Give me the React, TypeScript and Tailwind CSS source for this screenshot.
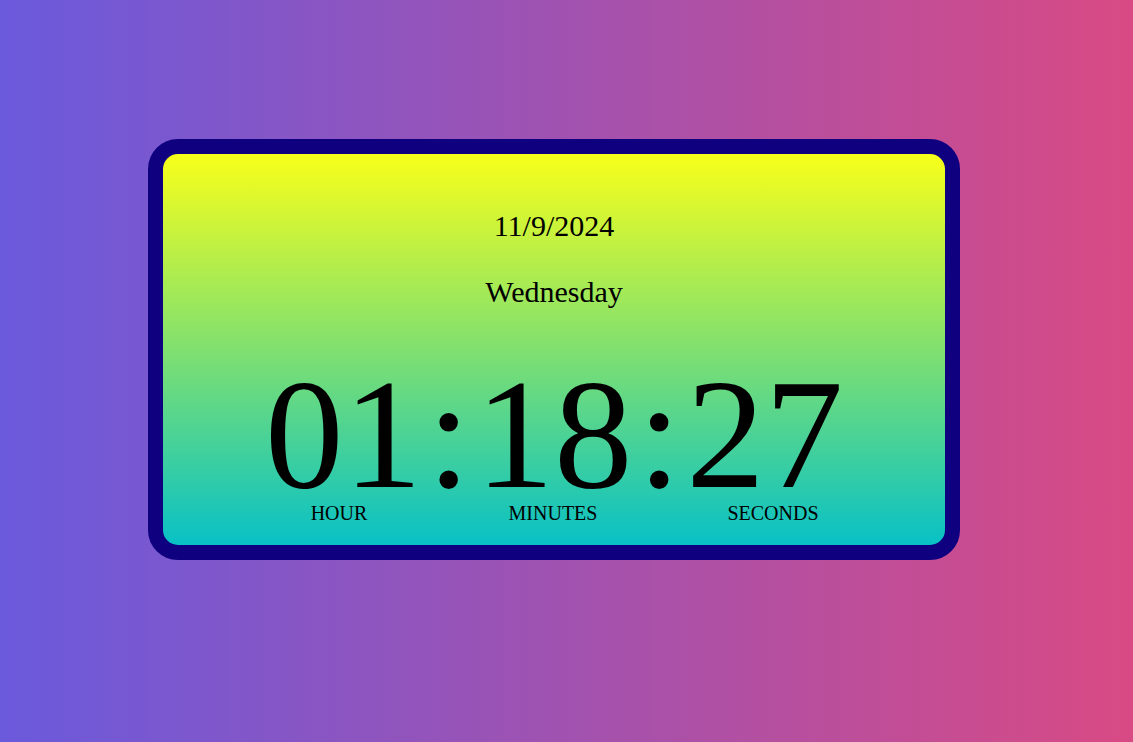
const units = [
  { value: "01", label: "HOUR" },
  { value: "18", label: "MINUTES" },
  { value: "27", label: "SECONDS" },
];

export default function App() {
  return (
    <div
      className="h-[742px] w-full bg-[linear-gradient(to_right,#6a5adc,#d84a84)] pl-[148px] pt-[139px] text-black"
      style={{ fontFamily: '"Liberation Serif", "Times New Roman", serif' }}
    >
      <div className="w-[812px] rounded-[30px] border-[15px] border-[#0f0080] bg-[#0f0080]">
        <div className="flex flex-col items-center rounded-[15px] bg-[linear-gradient(to_bottom,#f8ff1a,#08c1c6)] pt-[55px] pb-[20px]">
          <p className="text-[30px] leading-[34px]">11/9/2024</p>
          <p className="mt-[32px] text-[30px] leading-[34px]">Wednesday</p>

          <div className="mt-[57px] flex gap-[5px] text-[157px] leading-[136px]">
            <span>{units[0].value}</span>
            <span>:</span>
            <span>{units[1].value}</span>
            <span>:</span>
            <span>{units[2].value}</span>
          </div>

          <div className="-mt-px flex w-full pl-[116px] text-[20px] leading-[24px]">
            <span className="w-[120px] text-center">{units[0].label}</span>
            <span className="ml-[94px] w-[120px] text-center">{units[1].label}</span>
            <span className="ml-[100px] w-[120px] text-center">{units[2].label}</span>
          </div>
        </div>
      </div>
    </div>
  );
}
